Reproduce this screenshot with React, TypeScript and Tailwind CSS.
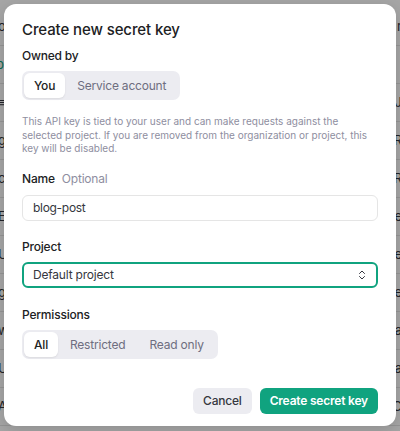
import { ChevronsUpDown } from "lucide-react";

const rows = [
  { l: "o", r: "r" },
  { l: "pa", r: "" },
  { l: "≡", r: "J" },
  { l: "g", r: "R" },
  { l: "c", r: "R" },
  { l: "E", r: "e" },
  { l: "U", r: "e" },
  { l: "g", r: "e" },
  { l: "w", r: "a" },
  { l: "U", r: "a" },
  { l: "Ab", r: "ListC" },
];

const Segmented = ({ options }: { options: string[] }) => (
  <div className="flex w-fit items-center rounded-[7px] bg-[#ececf1] p-[2px]">
    {options.map((o, i) => (
      <div
        key={o}
        className={
          i === 0
            ? "h-[25px] flex items-center rounded-[6px] bg-white px-[10px] text-[12px] tracking-[-0.2px] font-medium text-[#202123] shadow-[0_1px_2px_rgba(0,0,0,0.08)]"
            : "h-[25px] flex items-center px-[12px] text-[12px] tracking-[-0.2px] text-[#6e6e80]"
        }
      >
        {o}
      </div>
    ))}
  </div>
);

export default function App() {
  return (
    <div className="relative h-[431px] w-[400px] overflow-hidden bg-white font-['Inter',sans-serif]">
      {/* page behind the dialog */}
      <div className="flex flex-col pt-[8px]">
        {rows.map((row, i) => (
          <div
            key={i}
            className="flex h-[38px] items-center justify-between border-b border-[#e5e5e5] text-[13px] text-[#353740]"
          >
            <span className={i === 1 ? "-ml-[4px] text-[#10a37f]" : "-ml-[2px]"}>{row.l}</span>
            <span className="-mr-[2px]">{row.r}</span>
          </div>
        ))}
      </div>

      {/* overlay */}
      <div className="absolute inset-0 bg-black/35" />

      {/* dialog */}
      <div className="absolute left-[4px] right-[4px] top-[4px] bottom-[5px] flex flex-col rounded-[12px] bg-white px-[18px] pt-[14px] shadow-[0_4px_16px_rgba(0,0,0,0.15)]">
        <h2 className="text-[15px] font-medium leading-6 tracking-[-0.1px] text-[#202123]">Create new secret key</h2>

        <div className="mt-[4px] text-[12px] font-medium leading-5 tracking-[-0.2px] text-[#202123]">Owned by</div>
        <div className="mt-[5px]">
          <Segmented options={["You", "Service account"]} />
        </div>

        <p className="mt-[15px] text-[10px] leading-[13.7px] text-[#8e8ea0]">
          This API key is tied to your user and can make requests against the selected project. If you are removed from the organization or project, this key will be disabled.
        </p>

        <div className="mt-[13px] flex gap-[7px] text-[12px] leading-5 tracking-[-0.2px]">
          <span className="font-medium text-[#202123]">Name</span>
          <span className="text-[#8e8ea0]">Optional</span>
        </div>
        <div className="mt-[6px] flex h-[26px] items-center rounded-[6px] border border-[#e5e5e5] px-[10px] text-[12px] tracking-[-0.3px] text-[#353740]">
          blog-post
        </div>

        <div className="mt-[16px] text-[12px] font-medium leading-5 tracking-[-0.2px] text-[#202123]">Project</div>
        <div className="mt-[5px] flex h-[26px] items-center justify-between rounded-[6px] border-2 border-[#10a37f] pl-[9px] pr-[8px] text-[12px] tracking-[-0.2px] text-[#353740]">
          <span>Default project</span>
          <ChevronsUpDown className="h-[12px] w-[12px] text-[#353740]" strokeWidth={2} />
        </div>

        <div className="mt-[17px] text-[12px] font-medium leading-5 tracking-[-0.2px] text-[#202123]">Permissions</div>
        <div className="mt-[5px]">
          <Segmented options={["All", "Restricted", "Read only"]} />
        </div>

        <div className="mt-[29px] flex justify-end gap-[8px]">
          <button className="h-[26px] rounded-[6px] bg-[#ececf1] px-[10px] text-[12px] font-medium tracking-[-0.2px] text-[#353740]">
            Cancel
          </button>
          <button className="h-[26px] rounded-[6px] bg-[#10a37f] px-[10px] text-[12px] font-semibold tracking-[-0.2px] text-white">
            Create secret key
          </button>
        </div>
      </div>
    </div>
  );
}
